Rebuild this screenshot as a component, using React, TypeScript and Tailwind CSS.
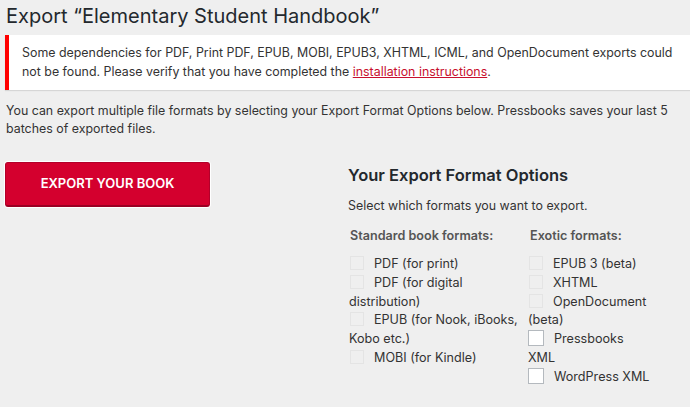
import React from 'react';

type Format = { label: string; enabled?: boolean };

const standard: Format[] = [
  { label: 'PDF (for print)' },
  { label: 'PDF (for digital distribution)' },
  { label: 'EPUB (for Nook, iBooks, Kobo etc.)' },
  { label: 'MOBI (for Kindle)' },
];

const exotic: Format[] = [
  { label: 'EPUB 3 (beta)' },
  { label: 'XHTML' },
  { label: 'OpenDocument (beta)' },
  { label: 'Pressbooks XML', enabled: true },
  { label: 'WordPress XML', enabled: true },
];

function FormatItem({ item }: { item: Format }) {
  return (
    <div className="text-[12.6px] leading-[18.8px] text-[#333]">
      {item.enabled ? (
        <span className="inline-block w-[16px] h-[16px] align-[-3px] bg-white border border-[#b4b9be] mr-[10px]" />
      ) : (
        <span className="inline-block w-[14px] h-[14px] align-[-2px] ml-[1px] bg-[#efefef] border border-[#e4e4e4] mr-[10px]" />
      )}
      {item.label}
    </div>
  );
}

export default function App() {
  return (
    <div
      className="w-[690px] h-[407px] overflow-hidden bg-[#efefef] text-[#23282d]"
      style={{ fontFamily: 'Inter, "Liberation Sans", sans-serif' }}
    >
      <h1 className="pl-[6px] pt-[1px] text-[20px] leading-[30px] font-normal text-[#23282d]">
        Export “Elementary Student Handbook”
      </h1>

      <div className="ml-[5px] mt-[4px] h-[55px] bg-white border-l-4 border-[#f00] shadow-[0_1px_1px_rgba(0,0,0,0.1)] pl-[13px] pt-[8px] text-[12.4px] leading-[19px] text-[#333]">
        <p>
          Some dependencies for PDF, Print PDF, EPUB, MOBI, EPUB3, XHTML, ICML, and OpenDocument exports could
          not be found. Please verify that you have completed the{' '}
          <a href="#" className="text-[#c8102e] underline">installation instructions</a>.
        </p>
      </div>

      <p className="pl-[6px] mt-[12px] text-[12.4px] leading-[18px] text-[#333] pr-[20px]">
        You can export multiple file formats by selecting your Export Format Options below. Pressbooks saves your last 5
        batches of exported files.
      </p>

      <div className="flex mt-[24px]">
        <div className="w-[348px] pl-[5px]">
          <button
            type="button"
            className="w-[205px] h-[45px] rounded-[3px] bg-[#d4002e] border border-[#b3002a] border-b-2 border-b-[#9a0024] text-white text-[13px] font-semibold shadow-[0_0_0_1px_#fff]"
          >
            EXPORT YOUR BOOK
          </button>
        </div>
        <div className="flex-1">
          <h2 className="text-[16.5px] leading-[22px] font-semibold text-[#23282d] mt-[2px]">Your Export Format Options</h2>
          <p className="mt-[11px] text-[12.4px] leading-[18px] text-[#333]">Select which formats you want to export.</p>
          <div className="flex mt-[12px]">
            <div className="w-[180px] pl-[1px]">
              <div className="text-[12.6px] leading-[18px] font-semibold text-[#555] pl-[1px]">Standard book formats:</div>
              <div className="mt-[10px] w-[170px]">
                {standard.map((f) => (
                  <FormatItem key={f.label} item={f} />
                ))}
              </div>
            </div>
            <div className="w-[130px]">
              <div className="text-[12.6px] leading-[18px] font-semibold text-[#555] pl-[2px]">Exotic formats:</div>
              <div className="mt-[10px] w-[125px]">
                {exotic.map((f) => (
                  <FormatItem key={f.label} item={f} />
                ))}
              </div>
            </div>
          </div>
        </div>
      </div>
    </div>
  );
}
